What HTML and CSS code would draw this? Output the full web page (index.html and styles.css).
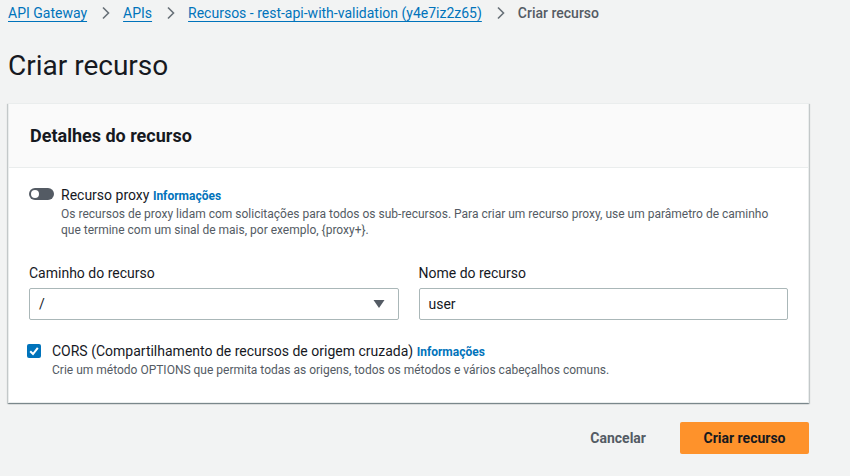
FILE: index.html
```html
<!DOCTYPE html>
<html lang="pt">
<head>
<meta charset="utf-8">
<link rel="stylesheet" href="styles.css">
</head>
<body>
<nav class="crumbs">
  <a href="#">API Gateway</a>
  <svg class="chev" viewBox="0 0 10 14"><path d="M2 1.5 L7.5 7 L2 12.5" fill="none" stroke="#687078" stroke-width="1.6"/></svg>
  <a href="#">APIs</a>
  <svg class="chev" viewBox="0 0 10 14"><path d="M2 1.5 L7.5 7 L2 12.5" fill="none" stroke="#687078" stroke-width="1.6"/></svg>
  <a href="#">Recursos - rest-api-with-validation (y4e7iz2z65)</a>
  <svg class="chev" viewBox="0 0 10 14"><path d="M2 1.5 L7.5 7 L2 12.5" fill="none" stroke="#687078" stroke-width="1.6"/></svg>
  <span class="current">Criar recurso</span>
</nav>
<h1 class="title">Criar recurso</h1>
<section class="card">
  <header class="card-head"><h2>Detalhes do recurso</h2></header>
  <div class="card-body">
    <div class="opt">
      <span class="toggle"><span class="knob"></span></span>
      <div class="opt-text">
        <div class="opt-label">Recurso proxy <a class="info" href="#">Informações</a></div>
        <p class="desc">Os recursos de proxy lidam com solicitações para todos os sub-recursos. Para criar um recurso proxy, use um parâmetro de caminho que termine com um sinal de mais, por exemplo, {proxy+}.</p>
      </div>
    </div>
    <div class="fields">
      <div class="field">
        <label class="flabel">Caminho do recurso</label>
        <div class="control select"><span>/</span>
          <svg class="caret" viewBox="0 0 12 10"><path d="M0.5 1 L11.5 1 L6 9 Z" fill="#545b64"/></svg>
        </div>
      </div>
      <div class="field">
        <label class="flabel">Nome do recurso</label>
        <div class="control"><span>user</span></div>
      </div>
    </div>
    <div class="opt cors">
      <span class="check"><svg viewBox="0 0 14 14"><path d="M3.2 7.2 L6 10 L10.8 3.8" fill="none" stroke="#fff" stroke-width="2"/></svg></span>
      <div class="opt-text">
        <div class="opt-label">CORS (Compartilhamento de recursos de origem cruzada) <a class="info" href="#">Informações</a></div>
        <p class="desc">Crie um método OPTIONS que permita todas as origens, todos os métodos e vários cabeçalhos comuns.</p>
      </div>
    </div>
  </div>
</section>
<div class="actions">
  <button class="btn-link">Cancelar</button>
  <button class="btn-primary">Criar recurso</button>
</div>
</body>
</html>
```
FILE: styles.css
```css
* { box-sizing: border-box; }
html, body { margin: 0; }
body {
  background: #f2f3f3;
  font-family: Roboto, "Noto Sans", sans-serif;
  color: #16191f;
  padding: 0 41px 0 8px;
  width: 850px;
  height: 476px;
  overflow: hidden;
}
.crumbs {
  display: flex;
  align-items: center;
  height: 26px;
  font-size: 14px;
}
.crumbs a { color: #0073bb; text-decoration: underline; text-underline-offset: 3px; }
.chev { width: 10px; height: 14px; margin: 0 12px 0 14px; }
.current { color: #545b64; font-weight: 500; }
.title {
  margin: 0;
  padding-top: 22px;
  font-size: 28px;
  font-weight: 400;
  line-height: 36px;
  height: 77px;
}
.card {
  background: #fff;
  border: 1px solid #eaeded;
  box-shadow: 0 1px 1px rgba(0,28,36,0.3), 1px 1px 1px rgba(0,28,36,0.15), -1px 1px 1px rgba(0,28,36,0.15);
  height: 300px;
}
.card-head {
  background: #fafafa;
  border-bottom: 1px solid #eaeded;
  height: 64px;
  display: flex;
  align-items: center;
  padding: 0 21px;
}
.card-head h2 { margin: 0; font-size: 18px; font-weight: 700; }
.card-body { padding: 17px 20px 0 20px; }
.opt { display: flex; align-items: flex-start; }
.toggle {
  width: 25px; height: 12px; border-radius: 6px;
  background: #545b64; margin-top: 3px; margin-right: 7px;
  position: relative; flex: none;
}
.knob {
  position: absolute; left: 2px; top: 2px; width: 8px; height: 8px;
  border-radius: 50%; background: #fff;
}
.opt-label { font-size: 14px; line-height: 20px; }
.info { color: #0073bb; font-size: 12px; font-weight: 700; text-decoration: none; }
.desc { margin: 0; font-size: 12px; line-height: 16px; color: #545b64; }
.fields {
  display: grid;
  grid-template-columns: 1fr 1fr;
  gap: 20px;
  margin-top: 24px;
}
.flabel { display: block; font-size: 14px; line-height: 22px; margin-bottom: 4px; }
.control {
  height: 32px;
  border: 1px solid #aab7b8;
  border-radius: 2px;
  display: flex;
  align-items: center;
  padding: 0 9px;
  font-size: 14px;
}
.select { justify-content: space-between; }
.caret { width: 12px; height: 10px; margin-right: 4px; }
.cors { margin-top: 21px; }
.check {
  width: 14px; height: 14px; border-radius: 2px; background: #0073bb;
  margin: 3px 11px 0 -2px; flex: none; display: flex;
}
.check svg { width: 14px; height: 14px; }
.actions {
  display: flex; justify-content: flex-end; align-items: center;
  gap: 26px; margin-top: 19px;
}
.btn-link {
  background: none; border: none; font-family: inherit;
  font-size: 14px; font-weight: 700; color: #545b64; padding: 0 8px;
}
.btn-primary {
  background: #fe922b; border: none; border-radius: 2px;
  font-family: inherit; font-size: 14px; font-weight: 700; color: #16191f;
  width: 129px; height: 32px;
}
```
